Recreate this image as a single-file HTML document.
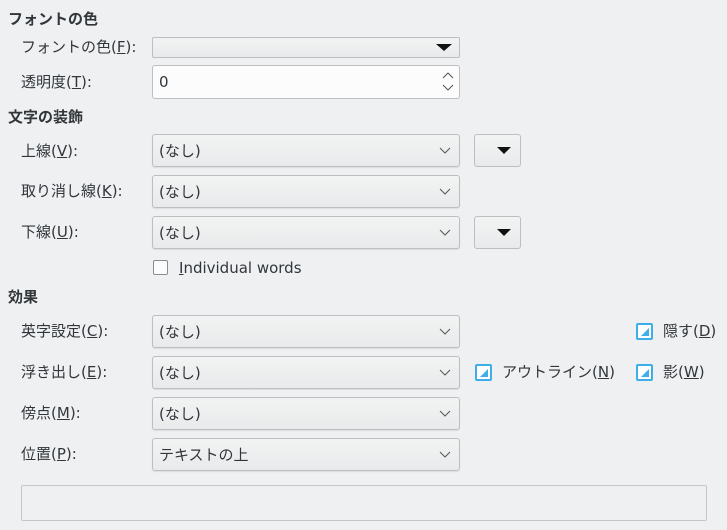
<!DOCTYPE html>
<html><head><meta charset="utf-8"><style>
body{margin:0;width:727px;height:530px;background:#eff0f1;position:relative;overflow:hidden;font-family:"DejaVu Sans","Noto Sans CJK JP",sans-serif;font-size:15px;color:#31363b}
.a{position:absolute;white-space:nowrap;line-height:20px}
.h{font-weight:bold}
.cb{position:absolute;left:152px;width:306px;height:31px;border:1px solid #bcbebf;border-radius:3px;background:linear-gradient(#f2f3f3,#e9eaeb);box-shadow:0 1px 1px rgba(0,0,0,.08)}
.cb span{position:absolute;left:6px;top:6px;line-height:20px}
.cb svg{position:absolute;right:8px;top:12px}
.sb{position:absolute;left:474px;width:45px;height:31px;border:1px solid #bcbebf;border-radius:3px;background:linear-gradient(#f2f3f3,#e9eaeb)}
.sb:after{content:"";position:absolute;left:22px;top:12px;border-left:7px solid transparent;border-right:7px solid transparent;border-top:7px solid #111}
.tc{position:absolute;width:13px;height:13px;border:2px solid #3daee9;border-radius:2px;background:#fff}
.tc:after{content:"";position:absolute;left:3px;top:3px;width:0;height:0;border-left:8px solid transparent;border-bottom:8px solid #3daee9}
u{text-decoration:underline}
</style></head><body>
<div class="a h" style="left:8px;top:9px">フォントの色</div>
<div class="a" style="left:21px;top:37px">フォントの色(<u>F</u>):</div>
<div style="position:absolute;left:152px;top:37px;width:306px;height:19px;border:1px solid #bcbebf;border-radius:2px;background:linear-gradient(#f2f3f3,#e9eaeb)"><div style="position:absolute;right:7px;top:6px;border-left:8px solid transparent;border-right:8px solid transparent;border-top:7px solid #111"></div></div>
<div class="a" style="left:21px;top:72px">透明度(<u>T</u>):</div>
<div style="position:absolute;left:152px;top:65px;width:306px;height:32px;border:1px solid #bcbebf;border-radius:3px;background:#fcfcfc"><span class="a" style="left:6px;top:6px">0</span>
<svg style="position:absolute;right:5px;top:6px" width="12" height="20"><path d="M1 6L6 1L11 6M1 13L6 18L11 13" fill="none" stroke="#555" stroke-width="1"/></svg></div>
<div class="a h" style="left:8px;top:107px">文字の装飾</div>

<div class="a" style="left:21px;top:141px">上線(<u>V</u>):</div>
<div class="cb" style="top:134px"><span>(なし)</span><svg width="12" height="8"><path d="M1 1L6 6L11 1" fill="none" stroke="#555"/></svg></div>
<div class="sb" style="top:134px"></div>

<div class="a" style="left:21px;top:181px">取り消し線(<u>K</u>):</div>
<div class="cb" style="top:175px"><span>(なし)</span><svg width="12" height="8"><path d="M1 1L6 6L11 1" fill="none" stroke="#555"/></svg></div>

<div class="a" style="left:21px;top:222px">下線(<u>U</u>):</div>
<div class="cb" style="top:216px"><span>(なし)</span><svg width="12" height="8"><path d="M1 1L6 6L11 1" fill="none" stroke="#555"/></svg></div>
<div class="sb" style="top:216px"></div>

<div style="position:absolute;left:153px;top:260px;width:13px;height:13px;border:1px solid #8a8d90;border-radius:2px;background:#fcfcfc"></div>
<div class="a" style="left:179px;top:258px"><u>I</u>ndividual words</div>

<div class="a h" style="left:8px;top:287px">効果</div>

<div class="a" style="left:21px;top:321px">英字設定(<u>C</u>):</div>
<div class="cb" style="top:315px"><span>(なし)</span><svg width="12" height="8"><path d="M1 1L6 6L11 1" fill="none" stroke="#555"/></svg></div>
<div class="tc" style="left:636px;top:323px"></div>
<div class="a" style="left:663px;top:321px">隠す(<u>D</u>)</div>

<div class="a" style="left:21px;top:362px">浮き出し(<u>E</u>):</div>
<div class="cb" style="top:356px"><span>(なし)</span><svg width="12" height="8"><path d="M1 1L6 6L11 1" fill="none" stroke="#555"/></svg></div>
<div class="tc" style="left:475px;top:364px"></div>
<div class="a" style="left:502px;top:362px">アウトライン(<u>N</u>)</div>
<div class="tc" style="left:636px;top:364px"></div>
<div class="a" style="left:663px;top:362px">影(<u>W</u>)</div>

<div class="a" style="left:21px;top:403px">傍点(<u>M</u>):</div>
<div class="cb" style="top:397px"><span>(なし)</span><svg width="12" height="8"><path d="M1 1L6 6L11 1" fill="none" stroke="#555"/></svg></div>

<div class="a" style="left:21px;top:444px">位置(<u>P</u>):</div>
<div class="cb" style="top:438px"><span>テキストの上</span><svg width="12" height="8"><path d="M1 1L6 6L11 1" fill="none" stroke="#555"/></svg></div>

<div style="position:absolute;left:21px;top:485px;width:684px;height:34px;border:1px solid #c4c6c8;border-radius:2px;background:#eff0f1"></div>
</body></html>
